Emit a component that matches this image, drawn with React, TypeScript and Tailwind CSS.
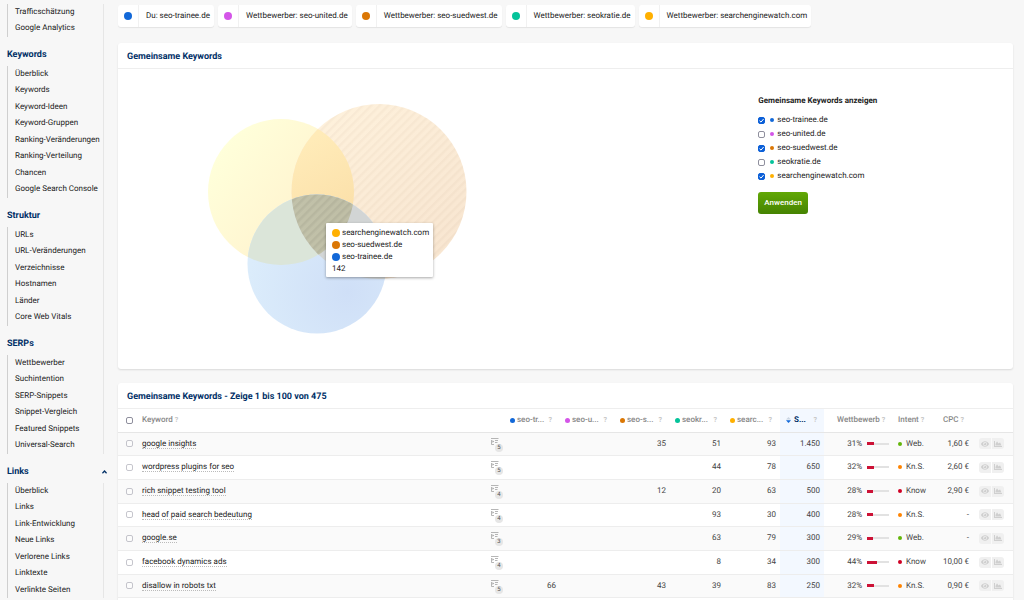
import { useState } from "react";
import { FaEye, FaChartArea } from "react-icons/fa";

const sections = [
  { title: "", items: ["Trafficschätzung", "Google Analytics"] },
  {
    title: "Keywords",
    items: [
      "Überblick",
      "Keywords",
      "Keyword-Ideen",
      "Keyword-Gruppen",
      "Ranking-Veränderungen",
      "Ranking-Verteilung",
      "Chancen",
      "Google Search Console",
    ],
  },
  {
    title: "Struktur",
    items: ["URLs", "URL-Veränderungen", "Verzeichnisse", "Hostnamen", "Länder", "Core Web Vitals"],
  },
  {
    title: "SERPs",
    items: ["Wettbewerber", "Suchintention", "SERP-Snippets", "Snippet-Vergleich", "Featured Snippets", "Universal-Search"],
  },
];

const linkItems = ["Überblick", "Links", "Link-Entwicklung", "Neue Links", "Verlorene Links", "Linktexte", "Verlinkte Seiten"];

const domains = [
  { name: "seo-trainee.de", short: "seo-tr...", label: "Du", dot: "bg-[#1268d8]", on: true },
  { name: "seo-united.de", short: "seo-u...", label: "Wettbewerber", dot: "bg-[#d455e8]", on: false },
  { name: "seo-suedwest.de", short: "seo-s...", label: "Wettbewerber", dot: "bg-[#db7704]", on: true },
  { name: "seokratie.de", short: "seokr...", label: "Wettbewerber", dot: "bg-[#04c39a]", on: false },
  { name: "searchenginewatch.com", short: "searc...", label: "Wettbewerber", dot: "bg-[#ffb000]", on: true },
];

const intentColors: Record<string, string> = {
  "Web.": "bg-[#62b50a]",
  "Kn.S.": "bg-[#ff8400]",
  Know: "bg-[#cf0024]",
};

const rows = [
  { keyword: "google insights", serp: 5, ranks: ["", "", "35", "51", "93"], volume: "1.450", comp: 31, intent: "Web.", cpc: "1,60 €" },
  { keyword: "wordpress plugins for seo", serp: 5, ranks: ["", "", "", "44", "78"], volume: "650", comp: 32, intent: "Kn.S.", cpc: "2,60 €" },
  { keyword: "rich snippet testing tool", serp: 4, ranks: ["", "", "12", "20", "63"], volume: "500", comp: 28, intent: "Know", cpc: "2,90 €" },
  { keyword: "head of paid search bedeutung", serp: 4, ranks: ["", "", "", "93", "30"], volume: "400", comp: 28, intent: "Kn.S.", cpc: "-" },
  { keyword: "google.se", serp: 3, ranks: ["", "", "", "63", "79"], volume: "300", comp: 29, intent: "Web.", cpc: "-" },
  { keyword: "facebook dynamics ads", serp: 4, ranks: ["", "", "", "8", "34"], volume: "300", comp: 44, intent: "Know", cpc: "10,00 €" },
  { keyword: "disallow in robots txt", serp: 5, ranks: ["66", "", "43", "39", "83"], volume: "250", comp: 32, intent: "Kn.S.", cpc: "0,90 €" },
];

const checkboxClass =
  "block size-[7px] shrink-0 appearance-none rounded-[2px] border border-[#8f8f9d] bg-white checked:border-[#0b5fd8] checked:bg-[#0b5fd8]";

function Help() {
  return <span className="text-[7px] font-bold text-[#c6c6c6]">?</span>;
}

function NavList({ items }: { items: string[] }) {
  return (
    <ul className="mr-[6px] border-r border-[#e6e6e6]">
      {items.map((item) => (
        <li key={item} className="ml-[7px] h-4 border-l border-[#cfcfcf] pl-[7px] leading-4 even:h-[17px]">
          <a href="#" className="hover:underline">
            {item}
          </a>
        </li>
      ))}
    </ul>
  );
}

function Sidebar() {
  return (
    <aside className="w-[110px] shrink-0 whitespace-nowrap pt-1">
      {sections.map((section) => (
        <nav key={section.title}>
          {section.title && (
            <h2 className="mr-[6px] border-r border-[#e6e6e6] pt-[10px] pb-[3px] pl-[7px] text-[9px] leading-4 font-bold text-[#002f66]">
              {section.title}
            </h2>
          )}
          <NavList items={section.items} />
        </nav>
      ))}
      <nav>
        <h2 className="flex items-center justify-between pt-[10px] pr-[3px] pb-[3px] pl-[7px] text-[9px] leading-4 font-bold text-[#002f66]">
          Links
          <svg width="5" height="4" viewBox="0 0 5 4" fill="none" stroke="currentColor" strokeWidth="1.3">
            <path d="M0.4 3.2 2.5 1 4.6 3.2" />
          </svg>
        </h2>
        <NavList items={linkItems} />
      </nav>
    </aside>
  );
}

function Venn() {
  return (
    <svg width="259" height="230" viewBox="208 104 259 230">
      <defs>
        <linearGradient id="yellow" x1="0.1" y1="0.2" x2="0.9" y2="0.8">
          <stop offset="0" stopColor="#ffffda" />
          <stop offset="1" stopColor="#ffefcb" />
        </linearGradient>
        <linearGradient id="orange" x1="0.15" y1="0.1" x2="0.8" y2="0.9">
          <stop offset="0" stopColor="#fef1dc" />
          <stop offset="1" stopColor="#f8e6d1" />
        </linearGradient>
        <linearGradient id="overlap" x1="0" y1="0" x2="0.6" y2="1">
          <stop offset="0.2" stopColor="#ffebb8" />
          <stop offset="0.7" stopColor="#fadda6" />
        </linearGradient>
        <radialGradient id="blue" cx="0.72" cy="0.7" r="0.72">
          <stop offset="0" stopColor="#cfdff7" />
          <stop offset="1" stopColor="#dbecfb" />
        </radialGradient>
        <linearGradient id="core">
          <stop offset="0" stopColor="#c2c2aa" />
          <stop offset="1" stopColor="#b9b69d" />
        </linearGradient>
        <pattern id="stripes" width="6" height="6" patternUnits="userSpaceOnUse" patternTransform="rotate(45)">
          <rect width="2.5" height="6" fill="#5a3000" fillOpacity="0.03" />
        </pattern>
        <pattern id="stripesDark" width="6" height="6" patternUnits="userSpaceOnUse" patternTransform="rotate(45)">
          <rect width="2.5" height="6" fill="#000" fillOpacity="0.05" />
        </pattern>
        <clipPath id="inYellow">
          <circle cx="281" cy="192" r="73" />
        </clipPath>
        <clipPath id="inBlue">
          <circle cx="317" cy="264" r="69.5" />
        </clipPath>
      </defs>
      <circle cx="281" cy="192" r="73" fill="url(#yellow)" />
      <circle cx="379" cy="191.5" r="87.5" fill="url(#orange)" />
      <circle cx="379" cy="191.5" r="87.5" fill="url(#stripes)" />
      <circle cx="379" cy="191.5" r="87.5" fill="url(#overlap)" clipPath="url(#inYellow)" />
      <circle cx="317" cy="264" r="69.5" fill="url(#blue)" />
      <circle cx="281" cy="192" r="73" fill="#dbe5d9" clipPath="url(#inBlue)" />
      <g clipPath="url(#inBlue)">
        <circle cx="379" cy="191.5" r="87.5" fill="#d2d5d5" />
        <g clipPath="url(#inYellow)">
          <circle cx="379" cy="191.5" r="87.5" fill="url(#core)" />
          <circle cx="379" cy="191.5" r="87.5" fill="url(#stripesDark)" />
        </g>
      </g>
    </svg>
  );
}

function SerpIcon({ count }: { count: number }) {
  return (
    <span className="relative mt-[2px] block h-[14px] w-3">
      <svg width="8" height="8" viewBox="0 0 8 8" className="block" fill="none" stroke="#a3a3a3">
        <path d="M0 .5H7.5M4 2.5H7M4 4.5H6.5M.5 2V6.5H3" strokeWidth="0.8" />
        <path d="M1.4 2.2 3.2 3.5 1.4 4.8Z" fill="#a3a3a3" stroke="none" />
      </svg>
      <span className="absolute right-0 bottom-0 size-2 rounded-full bg-[#e6e6e6] text-center text-[6px] leading-2 text-[#555]">
        {count}
      </span>
    </span>
  );
}

export default function App() {
  const [selected, setSelected] = useState<string[]>(domains.filter((d) => d.on).map((d) => d.name));

  const toggle = (name: string) =>
    setSelected(selected.includes(name) ? selected.filter((n) => n !== name) : [...selected, name]);

  return (
    <div className="flex h-screen overflow-hidden bg-[#f7f7f7] font-[Roboto,sans-serif] text-[8px] leading-3 text-[#222] [text-rendering:geometricPrecision]">
      <Sidebar />

      <main className="min-w-0 flex-1 pt-[5px] pr-[11px] pl-2">
        {/* Domains */}
        <div className="flex gap-1">
          {domains.map((d) => (
            <div key={d.name} className="flex h-[22px] items-center rounded-[3px] bg-white shadow-[0_1px_1px_rgba(0,0,0,0.08)]">
              <span className="flex h-full w-[21px] items-center justify-center border-r border-[#f1f1f1]">
                <span className={`size-2 rounded-full ${d.dot}`} />
              </span>
              <span className="pr-1 pl-[7px] whitespace-nowrap">
                {d.label}: {d.name}
              </span>
            </div>
          ))}
        </div>

        {/* Venn diagram */}
        <section className="mt-4 rounded-[3px] bg-white shadow-[0_1px_2px_rgba(0,0,0,0.12)]">
          <h2 className="border-b border-[#eee] pt-[7px] pb-[3px] pl-[9px] text-[9px] leading-[15px] font-bold text-[#002f66]">
            Gemeinsame Keywords
          </h2>
          <div className="grid grid-cols-[5fr_2fr] pt-[35px] pb-[35px]">
            <div className="pl-[90px]">
              <div className="relative w-fit">
                <Venn />
                <div className="absolute top-[119px] left-[118px] rounded-[1px] bg-white pt-1 pr-1 pb-[2px] pl-[6px] whitespace-nowrap shadow-[0_1px_3px_rgba(0,0,0,0.35)]">
                  {[domains[4], domains[2], domains[0]].map((d) => (
                    <div key={d.name} className="flex items-center gap-[2px]">
                      <span className={`size-2 rounded-full ${d.dot}`} />
                      {d.name}
                    </div>
                  ))}
                  <div>142</div>
                </div>
              </div>
            </div>
            <form className="-mt-[9px] pl-px" onSubmit={(e) => e.preventDefault()}>
              <h3 className="mb-[6px] font-bold">Gemeinsame Keywords anzeigen</h3>
              {domains.map((d) => (
                <label key={d.name} className="flex h-[14px] w-fit items-center">
                  <span className="relative">
                    <input
                      type="checkbox"
                      className={checkboxClass}
                      checked={selected.includes(d.name)}
                      onChange={() => toggle(d.name)}
                    />
                    {selected.includes(d.name) && (
                      <svg viewBox="0 0 7 7" className="pointer-events-none absolute inset-0 size-[7px]" fill="none" stroke="#fff">
                        <path d="M1.5 3.7 3 5.1 5.6 2" />
                      </svg>
                    )}
                  </span>
                  <span className={`mr-[3px] ml-[5px] size-1 rounded-full ${d.dot}`} />
                  {d.name}
                </label>
              ))}
              <button
                type="submit"
                className="mt-[9px] h-[22px] rounded-[3px] bg-linear-to-b from-[#62a806] to-[#458302] px-[6px] font-medium text-white"
              >
                Anwenden
              </button>
            </form>
          </div>
        </section>

        {/* Keyword table */}
        <section className="mt-[14px] rounded-[3px] bg-white pb-2 shadow-[0_1px_2px_rgba(0,0,0,0.12)]">
          <h2 className="border-b border-[#eee] pt-[7px] pb-[3px] pl-[9px] text-[9px] leading-[15px] font-bold text-[#002f66]">
            Gemeinsame Keywords - Zeige 1 bis 100 von 475
          </h2>
          <table className="w-full table-fixed text-[#444]">
            <colgroup>
              <col className="w-6" />
              <col />
              <col className="w-[14px]" />
              {domains.map((d) => (
                <col key={d.name} className="w-[55px]" />
              ))}
              <col className="w-11" />
              <col className="w-[69px]" />
              <col className="w-11" />
              <col className="w-[38px]" />
              <col className="w-[38px]" />
            </colgroup>
            <thead>
              <tr className="h-[23px] border-b border-[#e6e6e6] text-left whitespace-nowrap text-[#888]">
                <th className="pl-2">
                  <input type="checkbox" aria-label="Alle auswählen" className={checkboxClass} />
                </th>
                <th className="font-medium">
                  Keyword <Help />
                </th>
                <th />
                {domains.map((d) => (
                  <th key={d.name} className="pr-2 pl-[5px] font-medium">
                    <span className="flex items-center">
                      <span className={`mr-[2px] size-[5px] rounded-full ${d.dot}`} />
                      <span className="flex-1">{d.short}</span>
                      <Help />
                    </span>
                  </th>
                ))}
                <th className="bg-[#f3f8ff] pr-[7px] pl-[6px] font-bold text-[#002f66]">
                  <span className="flex items-center">
                    <svg width="5" height="6" viewBox="0 0 5 6" className="mr-[3px]">
                      <path d="M0 2.5 2.5 0 5 2.5Z" fill="#ccd6e3" />
                      <path d="M0 3.2H5L2.5 6Z" fill="#1268d8" />
                    </svg>
                    <span className="flex-1">S...</span>
                    <Help />
                  </span>
                </th>
                <th className="pl-[13px] font-medium">
                  Wettbewerb <Help />
                </th>
                <th className="pl-[5px] font-medium">
                  Intent <Help />
                </th>
                <th className="pl-[6px] font-medium">
                  CPC <Help />
                </th>
                <th />
              </tr>
            </thead>
            <tbody>
              {rows.map((row) => (
                <tr
                  key={row.keyword}
                  className="h-6 border-b border-[#ededed] text-right whitespace-nowrap odd:bg-[#fafafa] nth-[3n+1]:h-[23px]"
                >
                  <td className="pl-2">
                    <input type="checkbox" aria-label={row.keyword} className={`${checkboxClass} opacity-50`} />
                  </td>
                  <td className="text-left text-[#222]">
                    <a href="#" className="border-b border-dotted border-[#bbb]">
                      {row.keyword}
                    </a>
                  </td>
                  <td>
                    <SerpIcon count={row.serp} />
                  </td>
                  {row.ranks.map((rank, i) => (
                    <td key={i} className="pr-1">
                      {rank}
                    </td>
                  ))}
                  <td className="bg-[#f3f8ff] pr-1">{row.volume}</td>
                  <td className="pr-1">
                    <span className="flex items-center justify-end gap-[5px]">
                      {row.comp}%
                      <span className="flex h-[3px] w-[22px] items-center">
                        <span className="h-[3px] bg-[#cc1236]" style={{ width: `${row.comp}%` }} />
                        <span className="h-[2px] flex-1 bg-[#e2e2e2]" />
                      </span>
                    </span>
                  </td>
                  <td className="pl-[5px]">
                    <span className="flex items-center gap-1">
                      <span className={`size-1 rounded-full ${intentColors[row.intent]}`} />
                      {row.intent}
                    </span>
                  </td>
                  <td className="pr-[6px]">{row.cpc}</td>
                  <td className="pl-1">
                    <span className="flex gap-px text-[#cfcfcf]">
                      <button type="button" aria-label="Ansehen" className="flex h-[11px] w-3 items-center justify-center rounded-l-[3px] bg-[#f0f0f0]">
                        <FaEye size={8} />
                      </button>
                      <button type="button" aria-label="Verlauf" className="flex h-[11px] w-3 items-center justify-center rounded-r-[3px] bg-[#f0f0f0]">
                        <FaChartArea size={8} />
                      </button>
                    </span>
                  </td>
                </tr>
              ))}
            </tbody>
          </table>
        </section>
      </main>
    </div>
  );
}
